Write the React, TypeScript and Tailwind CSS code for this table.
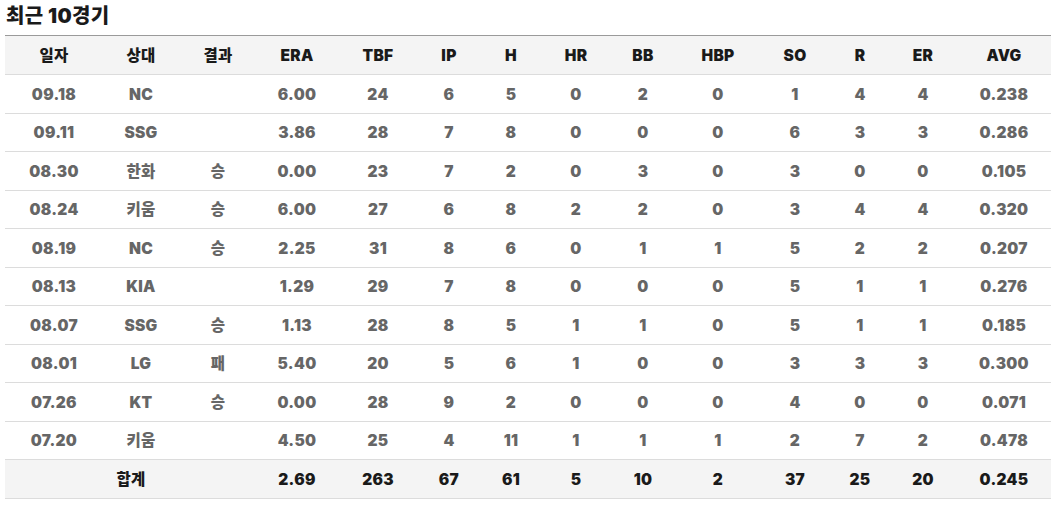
import React from "react";

const cols = [
  { k: "일자", w: 98 },
  { k: "상대", w: 76 },
  { k: "결과", w: 78 },
  { k: "ERA", w: 80 },
  { k: "TBF", w: 82 },
  { k: "IP", w: 60 },
  { k: "H", w: 64 },
  { k: "HR", w: 66 },
  { k: "BB", w: 68 },
  { k: "HBP", w: 82 },
  { k: "SO", w: 72 },
  { k: "R", w: 58 },
  { k: "ER", w: 68 },
  { k: "AVG", w: 94 },
];

const rows: string[][] = [
  ["09.18", "NC", "", "6.00", "24", "6", "5", "0", "2", "0", "1", "4", "4", "0.238"],
  ["09.11", "SSG", "", "3.86", "28", "7", "8", "0", "0", "0", "6", "3", "3", "0.286"],
  ["08.30", "한화", "승", "0.00", "23", "7", "2", "0", "3", "0", "3", "0", "0", "0.105"],
  ["08.24", "키움", "승", "6.00", "27", "6", "8", "2", "2", "0", "3", "4", "4", "0.320"],
  ["08.19", "NC", "승", "2.25", "31", "8", "6", "0", "1", "1", "5", "2", "2", "0.207"],
  ["08.13", "KIA", "", "1.29", "29", "7", "8", "0", "0", "0", "5", "1", "1", "0.276"],
  ["08.07", "SSG", "승", "1.13", "28", "8", "5", "1", "1", "0", "5", "1", "1", "0.185"],
  ["08.01", "LG", "패", "5.40", "20", "5", "6", "1", "0", "0", "3", "3", "3", "0.300"],
  ["07.26", "KT", "승", "0.00", "28", "9", "2", "0", "0", "0", "4", "0", "0", "0.071"],
  ["07.20", "키움", "", "4.50", "25", "4", "11", "1", "1", "1", "2", "7", "2", "0.478"],
];

const total = ["2.69", "263", "67", "61", "5", "10", "2", "37", "25", "20", "0.245"];

const font = {
  fontFamily: '"Inter", "Noto Sans CJK KR", sans-serif',
};

const cell = "text-[15.5px] font-black text-center border-b border-b-[#dcdcdc] p-0 pt-[1px] tracking-[0.3px]";

export default function App() {
  return (
    <div className="bg-white w-[1054px] h-[505px] pl-[5px] pt-[4px]" style={font}>
      <h2 className="text-[20px] leading-[25px] font-black text-[#1a1a1a] tracking-[0.4px] pl-[1px]">
        최근 10경기
      </h2>
      <table className="mt-[6px] border-collapse table-fixed w-[1045px] border-t border-t-[#9a9a9a]">
        <colgroup>
          {cols.map((c) => (
            <col key={c.k} style={{ width: c.w }} />
          ))}
        </colgroup>
        <thead>
          <tr className="bg-[#f4f4f4] h-[39px]">
            {cols.map((c) => (
              <th key={c.k} className={`${cell} text-[#1a1a1a]`}>
                {c.k}
              </th>
            ))}
          </tr>
        </thead>
        <tbody>
          {rows.map((r, i) => (
            <tr key={i} className="h-[38.5px]">
              {r.map((v, j) => (
                <td key={j} className={`${cell} text-[#666666]`}>
                  {v}
                </td>
              ))}
            </tr>
          ))}
          <tr className="bg-[#f4f4f4] h-[38.5px]">
            <td colSpan={3} className={`${cell} text-[#1a1a1a]`}>
              합계
            </td>
            {total.map((v, j) => (
              <td key={j} className={`${cell} text-[#1a1a1a]`}>
                {v}
              </td>
            ))}
          </tr>
        </tbody>
      </table>
    </div>
  );
}
